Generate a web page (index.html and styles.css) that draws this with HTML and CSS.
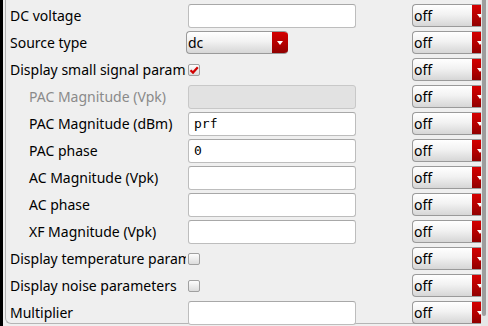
FILE: index.html
```html
<!DOCTYPE html>
<html lang="en">
<head>
    <meta charset="UTF-8">
    <title>Source properties</title>
    <link rel="stylesheet" href="styles.css">
</head>
<body>
    <div class="window">
        <div class="edge"></div>
        <div class="panel">
            <div class="row">
                <div class="label">DC voltage</div>
                <div class="cell"><div class="field"></div></div>
                <div class="off"><span>off</span><b></b></div>
            </div>
            <div class="row">
                <div class="label">Source type</div>
                <div class="cell"><div class="combo"><span>dc</span><b></b></div></div>
                <div class="off"><span>off</span><b></b></div>
            </div>
            <div class="row">
                <div class="label">Display small signal params</div>
                <div class="cell">
                    <div class="check">
                        <svg width="10" height="10" viewBox="0 0 10 10"><path d="M1.5 5.2 L4 7.6 L8.8 2.2" fill="none" stroke="#d00000" stroke-width="2.2"/></svg>
                    </div>
                </div>
                <div class="off"><span>off</span><b></b></div>
            </div>
            <div class="row">
                <div class="label sub dim">PAC Magnitude (Vpk)</div>
                <div class="cell"><div class="field disabled"></div></div>
                <div class="off"><span>off</span><b></b></div>
            </div>
            <div class="row">
                <div class="label sub">PAC Magnitude (dBm)</div>
                <div class="cell"><div class="field">prf</div></div>
                <div class="off"><span>off</span><b></b></div>
            </div>
            <div class="row">
                <div class="label sub">PAC phase</div>
                <div class="cell"><div class="field">0</div></div>
                <div class="off"><span>off</span><b></b></div>
            </div>
            <div class="row">
                <div class="label sub">AC Magnitude (Vpk)</div>
                <div class="cell"><div class="field"></div></div>
                <div class="off"><span>off</span><b></b></div>
            </div>
            <div class="row">
                <div class="label sub">AC phase</div>
                <div class="cell"><div class="field"></div></div>
                <div class="off"><span>off</span><b></b></div>
            </div>
            <div class="row">
                <div class="label sub">XF Magnitude (Vpk)</div>
                <div class="cell"><div class="field"></div></div>
                <div class="off"><span>off</span><b></b></div>
            </div>
            <div class="row">
                <div class="label">Display temperature params</div>
                <div class="cell"><div class="check"></div></div>
                <div class="off"><span>off</span><b></b></div>
            </div>
            <div class="row">
                <div class="label">Display noise parameters</div>
                <div class="cell"><div class="check"></div></div>
                <div class="off"><span>off</span><b></b></div>
            </div>
            <div class="row">
                <div class="label">Multiplier</div>
                <div class="cell"><div class="field"></div></div>
                <div class="off"><span>off</span><b></b></div>
            </div>
        </div>
        <div class="scrollbar"><div class="thumb"></div></div>
    </div>
</body>
</html>
```

FILE: styles.css
```css
body {
    margin: 0;
    background-color: #efefef;
    font-family: "Noto Sans", "Open Sans", sans-serif;
    font-size: 14px;
    color: #000;
}

.window {
    position: relative;
    display: flex;
    width: 488px;
    height: 326px;
    overflow: hidden;
    background-color: #efefef;
}

.edge {
    width: 3px;
    background-color: #000;
    flex-shrink: 0;
}

.panel {
    margin-left: 2px;
    width: 520px;
    height: 321px;
    padding-top: 2px;
    border-left: 1px solid #b5b5b5;
    border-bottom: 1px solid #b5b5b5;
    border-bottom-left-radius: 6px;
    flex-shrink: 0;
}

.row {
    display: flex;
    align-items: center;
    height: 27px;
}

.label {
    width: 180px;
    padding-left: 4px;
    box-sizing: border-box;
    white-space: nowrap;
    overflow: hidden;
    flex-shrink: 0;
}
.label.sub {
    padding-left: 23px;
}
.label.dim {
    color: #8a8a8a;
}

.cell {
    width: 226px;
    flex-shrink: 0;
    display: flex;
    align-items: center;
}

.field {
    margin-left: 2px;
    width: 168px;
    height: 24px;
    box-sizing: border-box;
    background-color: #fff;
    border: 1px solid #bdbdbd;
    border-top-color: #a8a8a8;
    border-radius: 3px;
    padding: 0 5px;
    font-family: "DejaVu Sans Mono", monospace;
    font-size: 13px;
    line-height: 22px;
}
.field.disabled {
    background-color: #e2e2e2;
    border-color: #c8c8c8;
}

.combo, .off {
    display: flex;
    height: 23px;
    box-sizing: border-box;
    border: 1px solid #9a9a9a;
    border-right: none;
    border-radius: 4px;
    background: linear-gradient(#ffffff, #f2f2f2 45%, #d6d6d6);
    overflow: hidden;
    flex-shrink: 0;
}
.combo {
    width: 102px;
}
.off {
    width: 76px;
}
.combo span, .off span {
    flex: 1;
    padding-left: 1px;
    line-height: 21px;
}
.combo b, .off b {
    width: 16px;
    background: linear-gradient(#d40000, #b00000 60%, #900000);
    position: relative;
}
.combo b::after, .off b::after {
    content: "";
    position: absolute;
    left: 5px;
    top: 9px;
    border-left: 3px solid transparent;
    border-right: 3px solid transparent;
    border-top: 4px solid #fff;
}

.check {
    margin-left: 2px;
    width: 12px;
    height: 12px;
    box-sizing: border-box;
    border: 1px solid #a0a0a0;
    border-radius: 2px;
    background: linear-gradient(#fdfdfd, #dcdcdc);
    display: flex;
    align-items: center;
    justify-content: center;
}

.scrollbar {
    position: absolute;
    top: 0;
    right: 0;
    width: 7px;
    height: 326px;
    background-color: #e6e6e6;
}
.thumb {
    margin-left: 1px;
    width: 4px;
    height: 316px;
    background-color: #9d9d9d;
    border-radius: 0 0 2px 2px;
}
```
